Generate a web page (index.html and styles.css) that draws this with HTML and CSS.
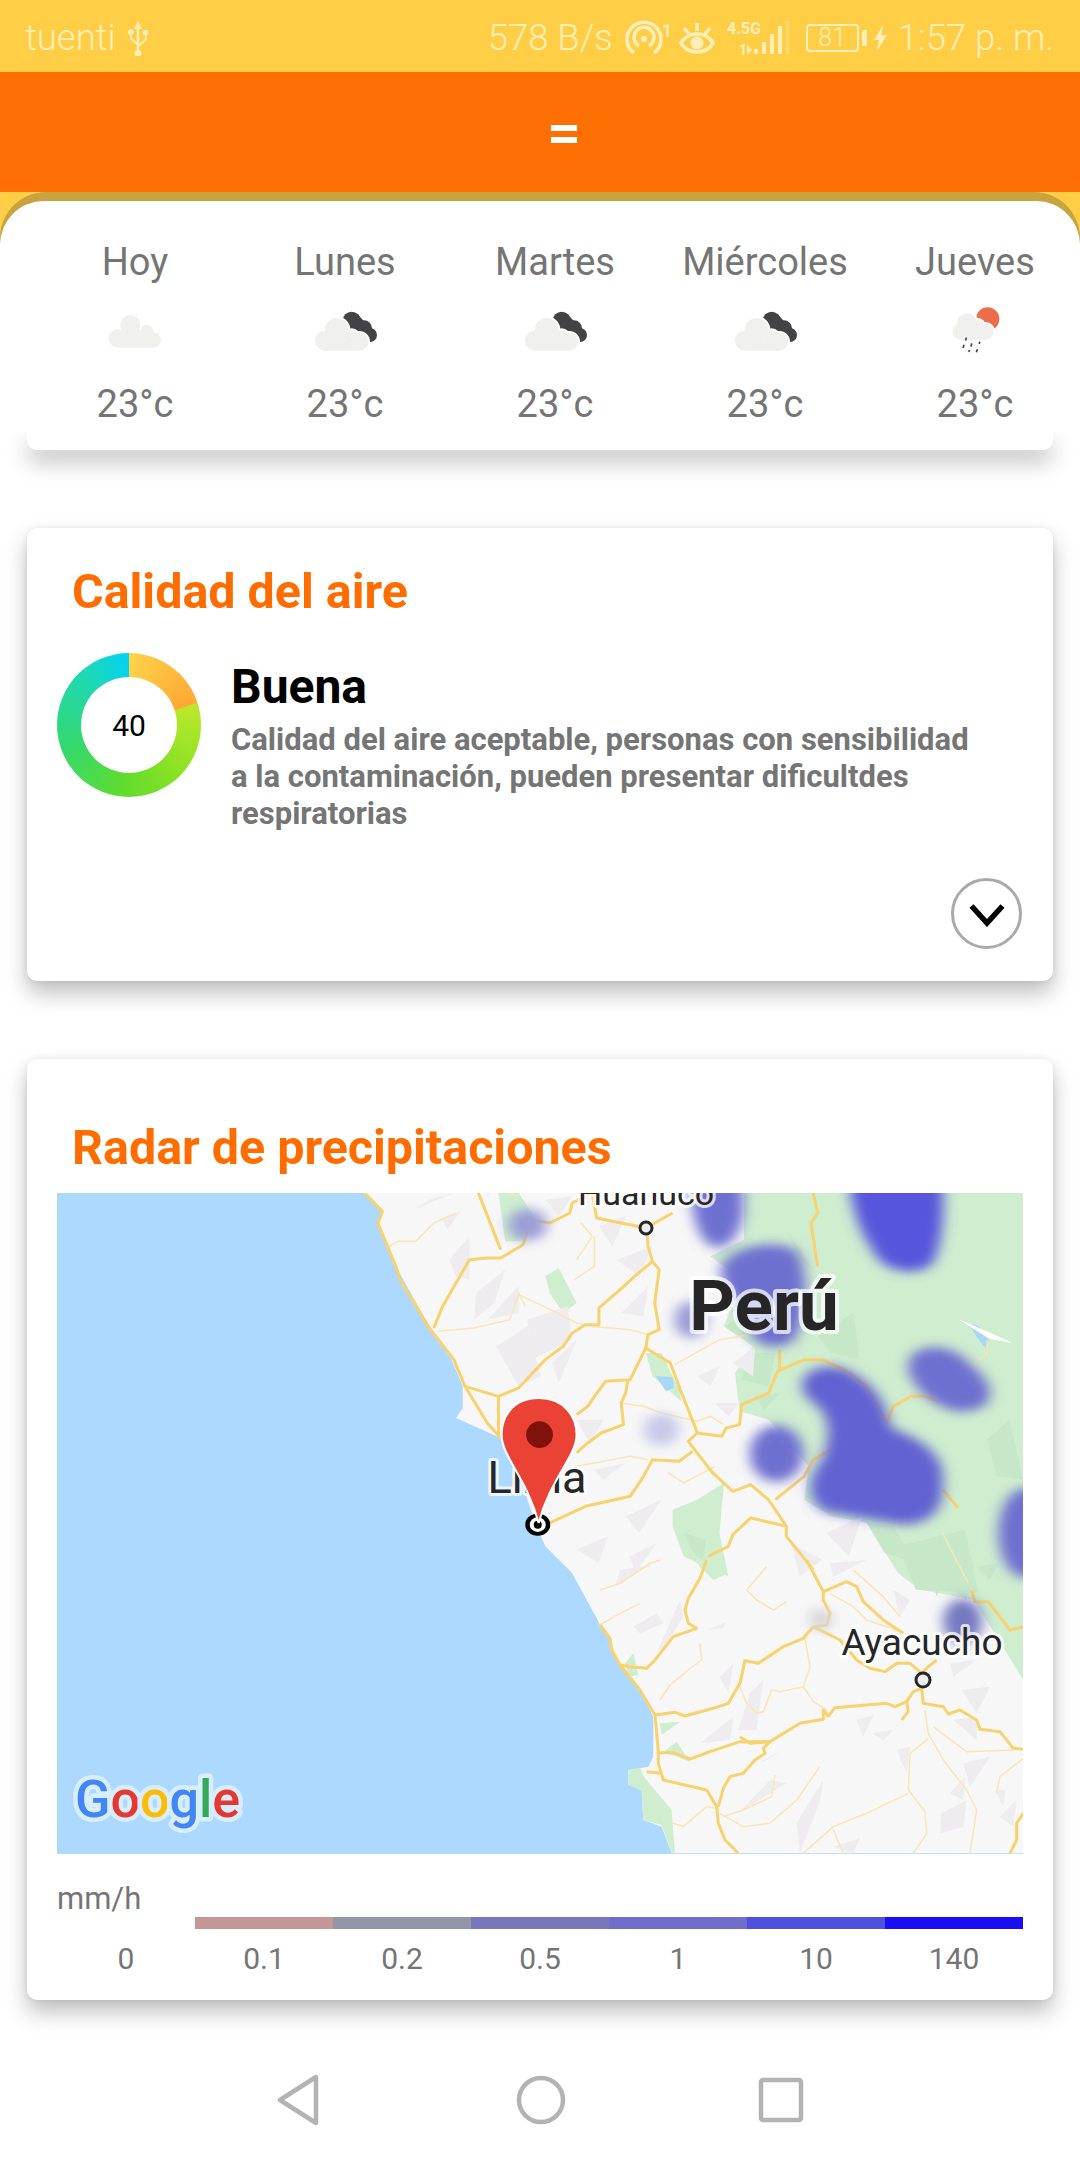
FILE: index.html
```html
<!DOCTYPE html>
<html lang="es">
<head>
<meta charset="utf-8">
<title>Clima</title>
<link rel="stylesheet" href="styles.css">
</head>
<body>
<svg class="defs" width="0" height="0" aria-hidden="true">
  <defs>
    <symbol id="cloud-dark" viewBox="0 0 300 180">
      <g class="ic-dark"><circle cx="170" cy="62" r="27"/><circle cx="207" cy="85" r="24"/><circle cx="225" cy="105" r="21"/><path d="M150 50 L190 45 L240 100 L215 125 L170 95Z"/></g>
      <g class="ic-halo"><circle cx="125" cy="90" r="36"/><circle cx="90" cy="122" r="30"/><circle cx="193" cy="125" r="27"/><circle cx="170" cy="112" r="22"/><rect x="90" y="120" width="103" height="32"/></g>
      <g class="ic-light"><circle cx="125" cy="90" r="36"/><circle cx="90" cy="122" r="30"/><circle cx="193" cy="125" r="27"/><circle cx="170" cy="112" r="22"/><rect x="90" y="120" width="103" height="32"/></g>
    </symbol>
  </defs>
</svg>
<div class="phone">
  <header class="status">
    <div class="status-group">
      <span>tuenti</span>
      <svg class="ic-usb" width="24" height="36" viewBox="0 0 24 36"><path d="M12 1 L16 9 H13.2 V24 L19 19 V15 H17 V10 H22 V15 H20.5 V20 L13.2 27 V30 A3.4 3.4 0 1 1 10.8 30 V25 L4 19 V15 A3 3 0 1 1 5.8 15 V18 L10.8 22 V9 H8Z"/></svg>
    </div>
    <div class="status-group status-right">
      <span class="speed">578 B/s</span>
      <svg class="ic-hot" width="48" height="36" viewBox="0 0 48 36"><path d="M9 33 A17 17 0 1 1 29 33" /><path d="M14 26 A10 10 0 1 1 24 26"/><circle class="solid" cx="19" cy="19" r="3"/><text class="sup" x="37" y="17">1</text></svg>
      <svg class="ic-eye" width="36" height="36" viewBox="0 0 36 36"><path d="M2 23 C9 11 27 11 34 23 C27 35 9 35 2 23Z"/><circle class="solid" cx="18" cy="23" r="6.5"/><path d="M18 3 V11 M5 8 L10 14 M31 8 L26 14"/></svg>
      <svg class="ic-sig" width="62" height="38" viewBox="0 0 62 38"><text class="net" x="0" y="15">4.5G</text><text class="net-sm" x="12" y="36">1</text><path class="arrow" d="M20 26 V36 L25 31Z"/><rect x="27" y="30" width="4" height="5" rx="1"/><rect x="35" y="23" width="4" height="12" rx="1"/><rect x="43" y="15" width="4" height="20" rx="1"/><rect x="51" y="7" width="4" height="28" rx="1"/><rect class="faint" x="59" y="2" width="3" height="33" rx="1"/></svg>
      <div class="battery">
        <div class="bat-body">81</div>
        <div class="bat-nub"></div>
      </div>
      <svg class="ic-bolt" width="13" height="26" viewBox="0 0 13 26"><path d="M9 0 L0 15 H5 L3 26 L13 10 H7.5Z"/></svg>
      <span class="clock">1:57 p. m.</span>
    </div>
  </header>
  <div class="topbar"><button class="menu" aria-label="Menú"><span></span><span></span></button></div>
  <main class="content">
    <section class="hero">
      <div class="hero-shell">
        <div class="forecast">
          <div class="day"><div class="day-name">Hoy</div>
            <svg class="ic-day" width="100" height="60" viewBox="0 0 300 180"><g class="ic-light"><circle cx="136" cy="75" r="30"/><circle cx="186" cy="92" r="18"/><circle cx="99" cy="115" r="28"/><circle cx="205" cy="120" r="23"/><rect x="99" y="90" width="106" height="53"/></g></svg>
            <div class="temp">23°c</div></div>
          <div class="day"><div class="day-name">Lunes</div>
            <svg class="ic-day" width="100" height="60"><use href="#cloud-dark" width="100" height="60"/></svg>
            <div class="temp">23°c</div></div>
          <div class="day"><div class="day-name">Martes</div>
            <svg class="ic-day" width="100" height="60"><use href="#cloud-dark" width="100" height="60"/></svg>
            <div class="temp">23°c</div></div>
          <div class="day"><div class="day-name">Miércoles</div>
            <svg class="ic-day" width="100" height="60"><use href="#cloud-dark" width="100" height="60"/></svg>
            <div class="temp">23°c</div></div>
          <div class="day"><div class="day-name">Jueves</div>
            <svg class="ic-day" width="100" height="60" viewBox="0 0 300 180"><g transform="translate(16 0)"><circle class="ic-sun" cx="172" cy="57" r="35"/><g class="ic-halo"><circle cx="110" cy="70" r="30"/><circle cx="92" cy="95" r="25"/><circle cx="165" cy="95" r="24"/><circle cx="142" cy="78" r="19"/><rect x="92" y="85" width="73" height="35"/></g><g class="ic-light"><circle cx="110" cy="70" r="30"/><circle cx="92" cy="95" r="25"/><circle cx="165" cy="95" r="24"/><circle cx="142" cy="78" r="19"/><rect x="92" y="85" width="73" height="35"/></g><path class="ic-rain" d="M108 113 L106 122 M148 125 L147 132 M124 130 L122 140 M101 134 L98 144 M117 150 L116 156 M141 148 L138 157"/></g></svg>
            <div class="temp">23°c</div></div>
        </div>
      </div>
    </section>
    <div class="card-stub"></div>

    <section class="card card-air">
      <h2 class="card-title">Calidad del aire</h2>
      <div class="air-row">
        <div class="donut"><div class="donut-hole">40</div></div>
        <div class="air-text">
          <h3 class="air-level">Buena</h3>
          <p class="air-desc">Calidad del aire aceptable, personas con sensibilidad a la contaminación, pueden presentar dificultdes respiratorias</p>
        </div>
      </div>
      <div class="air-actions">
        <button class="round-btn" aria-label="Ver más"><svg width="36" height="24" viewBox="0 0 36 24"><path d="M2.5 3 L18 20 L33.5 3"/></svg></button>
      </div>
    </section>

    <section class="card card-radar">
      <h2 class="card-title">Radar de precipitaciones</h2>
      <div class="map">
        <svg class="map-svg" width="966" height="661" viewBox="0 0 966 661">
          <defs>
            <filter id="soft" x="-40%" y="-40%" width="180%" height="180%"><feGaussianBlur stdDeviation="16"/></filter>
          </defs>
          <rect class="sea" width="966" height="661"/>
          <polygon class="land" transform="translate(283 -13.33) scale(.4464 .3333)" points="55,40 95,95 85,140 125,260 200,440 250,540 275,620 275,685 260,715 360,775 400,880 440,1040 460,1100 520,1180 560,1280 620,1420 650,1500 1530,1500 1530,40"/>
          <polygon class="land" transform="translate(543 367) scale(.3333)" points="-30,130 0,195 30,240 50,300 120,390 160,470 160,590 145,620 120,625 85,630 85,675 125,690 130,780 185,800 215,880 1440,880 1440,-20 -30,-20"/>
          <!-- upper map -->
          <g transform="translate(283 -13.33) scale(.4464 .3333)">
            <polygon class="green" points="905,40 1530,40 1530,1500 1420,1260 1300,1230 1250,1180 1180,1030 1100,1010 1040,960 1050,860 960,720 895,695 885,580 925,500 870,450 860,440 900,300 830,230 905,180"/>
            <g class="green">
              <polygon points="355,40 400,40 435,110 410,185 370,185"/>
              <polygon points="460,290 490,265 530,370 500,400 470,340"/>
              <polygon points="685,520 720,520 760,630 765,665 700,590"/>
              <polygon points="745,990 800,960 860,910 850,1060 870,1190 830,1170 770,1130 745,1040"/>
            </g>
            <g class="green-dark">
              <polygon points="1000,150 1060,270 1030,240"/>
              <polygon points="1070,470 1150,400 1165,540 1100,520"/>
              <polygon points="860,440 900,410 910,480"/>
              <polygon points="920,520 975,520 960,620 900,600"/>
              <polygon points="930,650 985,640 950,690"/>
              <polygon points="1250,1100 1400,1050 1430,1240 1290,1230"/>
              <polygon points="1450,780 1500,720 1530,900 1470,890"/>
              <polygon points="1180,1030 1240,1040 1290,1150 1220,1120"/>
              <polygon points="770,1060 820,1080 810,1170"/>
            </g>
            <g class="terrain">
              <polygon points="165,90 255,40 200,60"/>
              <polygon points="230,120 270,95 240,150"/>
              <polygon points="245,240 290,170 290,300 260,290"/>
              <polygon points="305,340 370,270 345,370 300,420"/>
              <polygon points="330,420 400,320 400,400"/>
              <polygon points="350,500 420,440 450,590 400,620"/>
              <polygon points="420,420 510,380 520,480 430,540"/>
              <polygon points="475,550 530,480 490,610"/>
              <polygon points="580,140 640,110 610,200"/>
              <polygon points="620,240 700,200 670,290"/>
              <polygon points="460,60 520,50 490,110"/>
              <polygon points="630,400 690,320 680,410"/>
              <polygon points="800,590 850,560 830,620"/>
              <polygon points="880,550 930,500 925,590"/>
              <polygon points="840,670 895,670 870,710"/>
              <polygon points="530,720 590,720 560,790"/>
              <polygon points="570,870 640,850 590,900"/>
              <polygon points="530,1110 600,1070 580,1150"/>
              <polygon points="640,1010 720,960 670,1060"/>
              <polygon points="650,1130 710,1090 660,1180"/>
              <polygon points="1090,1060 1170,1010 1140,1130"/>
              <polygon points="1010,1090 1080,1140 1030,1190"/>
            </g>
            <polygon class="lake" points="708,590 745,592 748,625 730,635"/>
            <polygon class="lake" points="1412,432 1430,440 1455,480 1445,505 1420,460"/>
            <polygon class="streak" points="1385,418 1410,432 1508,490 1455,478"/>
            <g class="roads-thin">
              <polyline points="105,205 130,185 170,185 210,130 260,100"/>
              <polyline points="220,455 300,445 380,420 400,345 480,395 530,430 560,440 650,450 690,465"/>
              <polyline points="400,340 415,380"/>
              <polyline points="530,240 565,170 540,130"/>
              <polyline points="570,170 570,260 525,300"/>
              <polyline points="630,670 680,680 720,700 800,725 830,710 860,735"/>
              <polyline points="750,555 810,510 850,480 920,465"/>
              <polyline points="530,860 650,830 690,840"/>
              <polyline points="735,880 770,910 840,860"/>
              <polyline points="1350,1060 1380,1140 1415,1230"/>
              <polyline points="1450,480 1450,520 1420,555 1280,600"/>
              <polyline points="330,40 360,30 400,50"/>
            </g>
            <g class="roads">
              <polyline points="55,40 95,95 85,130 125,260 135,300 200,445 255,540 280,620 355,650 400,625 460,540 500,500 520,460 550,435 580,435 580,385 610,350 640,315 660,290 700,245 690,200 688,150"/>
              <polyline points="210,445 230,380 290,240 330,235 360,235 410,195 430,120 470,130 515,100 520,70 565,40"/>
              <polyline points="310,40 360,210"/>
              <polyline points="565,40 575,115 610,125 650,135 685,145 745,100"/>
              <polyline points="700,245 715,270 705,370 715,450 690,465 685,505 740,550 765,640 795,740 800,760 780,785 835,880 880,935 920,915 960,960 1000,1040 1000,1070 1060,1170"/>
              <polyline points="685,505 650,600 595,605 570,650 555,680 530,705"/>
              <polyline points="280,620 330,730 360,775"/>
              <polyline points="355,650 355,770"/>
              <polyline points="645,600 640,640 630,670 635,735 585,760 555,790 530,820"/>
              <polyline points="800,760 855,770 865,745 895,735 900,675 960,640 980,575 1040,540 1080,540 1130,570 1180,620 1225,730"/>
              <polyline points="985,510 985,575"/>
              <polyline points="975,960 1040,890 1060,840 1100,810"/>
              <polyline points="1225,730 1240,680 1280,650 1310,650 1340,665"/>
              <polyline points="1060,40 1070,100 1055,130 1070,260"/>
              <polyline points="1350,930 1385,985"/>
              <polyline points="470,1030 550,980 650,950 680,890 700,840 760,845 790,815"/>
              <polyline points="1000,1040 920,1015 880,1065 870,1100 825,1130"/>
            </g>
          </g>
          <!-- lower map -->
          <g transform="translate(543 367) scale(.3333)">
            <g class="green">
              <polygon points="270,-20 385,40 340,60 300,20"/>
              <polygon points="85,630 120,625 135,655 215,750 225,880 215,880 185,795 130,780 125,690 85,675"/>
              <polygon points="75,310 100,280 115,345 85,350"/>
              <polygon points="180,490 240,485 185,525"/>
              <polygon points="190,575 230,545 270,605"/>
            </g>
            <g class="green-dark">
              <polygon points="925,0 960,20 940,70"/>
              <polygon points="1000,60 1030,55 1010,110"/>
              <polygon points="1130,20 1195,10 1170,60"/>
              <polygon points="1060,90 1120,60 1100,120"/>
            </g>
            <g class="terrain">
              <polygon points="60,30 150,15 45,80"/>
              <polygon points="170,280 240,120 250,170 200,250"/>
              <polygon points="100,200 170,160 190,190 120,220"/>
              <polygon points="320,210 380,185 370,205"/>
              <polygon points="360,350 400,310 385,400"/>
              <polygon points="415,510 450,400 490,360 470,510"/>
              <polygon points="300,550 400,470 390,540"/>
              <polygon points="415,760 510,660 560,670"/>
              <polygon points="470,610 550,570 500,600"/>
              <polygon points="590,790 670,660 660,720 600,880"/>
              <polygon points="770,480 820,465 790,530"/>
              <polygon points="815,520 880,510 850,540"/>
              <polygon points="890,570 930,560 920,640"/>
              <polygon points="1090,610 1170,590 1110,680"/>
              <polygon points="1050,700 1095,650 1090,720"/>
              <polygon points="1025,760 1100,720 1090,800 1020,820"/>
              <polygon points="1185,690 1215,690 1210,740"/>
              <polygon points="1085,390 1170,380 1130,460"/>
              <polygon points="1050,310 1130,300 1060,350"/>
              <polygon points="1060,480 1130,470 1130,540"/>
              <polygon points="690,10 800,0 700,50"/>
              <polygon points="880,90 930,120 900,170"/>
              <polygon points="1200,770 1250,720 1240,800"/>
              <polygon points="700,860 780,835 760,880"/>
            </g>
            <g class="roads-thin">
              <polyline points="0,90 60,70 150,10 180,0"/>
              <polyline points="0,195 60,160 120,130"/>
              <polyline points="500,20 440,90 470,120 520,150 560,125"/>
              <polyline points="615,235 630,320 610,380 640,425 680,450"/>
              <polyline points="610,380 540,395 515,390 490,455 470,460 440,430 420,380"/>
              <polyline points="300,250 305,300 265,330 210,375 180,420"/>
              <polyline points="360,760 430,800 510,790 590,720 660,620"/>
              <polyline points="525,645 515,710 430,750 370,770"/>
              <polyline points="975,450 985,520 1030,600 1100,690 1130,750 1110,880"/>
              <polyline points="985,535 930,580 925,690 975,755 980,820 940,880"/>
              <polyline points="925,700 800,760 700,800 610,880"/>
              <polyline points="700,810 730,880"/>
              <polyline points="1000,500 1100,575 1240,570"/>
              <polyline points="1270,595 1200,650 1190,700"/>
              <polyline points="220,790 250,800 320,740 350,745"/>
              <polyline points="690,100 760,140 800,180 890,210"/>
              <polyline points="760,30 850,110 900,170"/>
            </g>
            <g class="roads">
              <polyline points="320,0 300,55 265,115 255,150 265,190 290,205 220,230 165,300 140,325 90,320 60,315 35,270 30,235 0,195"/>
              <polyline points="60,315 120,390 165,465 225,457 255,468 340,445 385,430 420,370 435,302 475,310 550,260 610,235 640,200 680,195 690,160 670,120 670,95 620,0"/>
              <polyline points="670,95 740,65 770,80 790,125 850,180 910,220"/>
              <polyline points="640,200 720,240 770,300 810,325 855,335 890,310 930,310 965,340"/>
              <polyline points="165,465 175,575 175,610 190,660 320,690 350,740 355,790 375,840 415,880"/>
              <polyline points="175,578 220,578 270,597 330,575 420,545 510,545 600,490 670,478 670,450 685,468 705,443 860,430 885,440 920,425 940,395 965,385"/>
              <polyline points="420,530 450,550 510,545"/>
              <polyline points="510,545 490,565 495,580 465,600 430,640 390,650 370,685 355,740"/>
              <polyline points="965,385 970,430 1030,440 1045,462 1080,450 1130,480 1140,508 1200,515 1240,565 1270,568"/>
              <polyline points="920,425 925,455 905,480"/>
              <polyline points="1115,90 1125,125 1165,125 1230,210 1270,200"/>
              <polyline points="1270,760 1250,790 1250,840 1230,880"/>
              <polyline points="140,635 185,640"/>
              <polyline points="965,340 985,320 1010,300"/>
            </g>
          </g>
          <!-- radar -->
          <g class="rain" transform="translate(283 -13.33) scale(.4464 .3333)">
            <path class="r-mid" d="M785 -20 L895 -20 C915 80 905 180 850 205 C805 200 785 120 785 -20Z"/>
            <path class="r-dark" d="M1140 -20 L1350 -20 C1355 100 1350 205 1325 255 C1290 290 1235 275 1210 245 C1185 195 1145 130 1140 -20Z"/>
            <path class="r-mid" d="M855 260 C875 195 985 175 1025 215 C1055 290 1045 425 1015 485 C980 515 925 505 915 445 C895 355 845 335 855 260Z"/>
            <ellipse class="r-pale" cx="785" cy="420" rx="36" ry="55"/>
            <path class="r-mid" d="M1275 540 C1295 485 1375 495 1405 545 C1455 595 1475 655 1435 685 C1380 715 1325 675 1295 625 C1275 590 1270 570 1275 540Z"/>
            <path class="r-strong" d="M1035 610 C1045 555 1115 545 1155 585 C1215 635 1225 695 1235 745 C1295 775 1345 815 1350 880 C1355 960 1345 1025 1270 1035 C1200 1025 1125 1005 1085 995 C1045 960 1045 900 1075 850 C1105 780 1095 700 1065 675 C1045 655 1035 640 1035 610Z"/>
            <ellipse class="r-mid" cx="978" cy="822" rx="60" ry="85"/>
            <ellipse class="r-mid" cx="1535" cy="1060" rx="60" ry="135"/>
            <ellipse class="r-faint" cx="720" cy="750" rx="40" ry="48"/>
            <ellipse class="r-pale" cx="420" cy="135" rx="44" ry="48"/>
            <ellipse class="r-deep" cx="1395" cy="1325" rx="44" ry="68"/>
            <ellipse class="r-grey" cx="1077" cy="1320" rx="26" ry="34"/>
          </g>
          <!-- labels -->
          <text class="lbl" x="589" y="12" text-anchor="middle">Huánuco</text>
          <circle class="city" cx="589" cy="35" r="6"/>
          <text class="lbl-country" x="707" y="137" text-anchor="middle">Perú</text>
          <text class="lbl-lima" x="480" y="300" text-anchor="middle">Lima</text>
          <text class="lbl-big" x="865" y="462" text-anchor="middle">Ayacucho</text>
          <circle class="city" cx="866" cy="487" r="7"/>
          <!-- pin -->
          <g transform="translate(283 -13.33) scale(.4464 .3333)">
            <ellipse class="t-black" cx="443" cy="1035" rx="28" ry="33"/>
            <ellipse class="t-white" cx="443" cy="1035" rx="18" ry="22"/>
            <ellipse class="t-black" cx="443" cy="1035" rx="9" ry="12"/>
            <path class="pin" d="M445 655 C385 655 362 715 362 765 C362 830 420 900 445 1030 C470 900 530 830 530 765 C530 715 505 655 445 655Z"/>
            <ellipse class="pin-dot" cx="447" cy="765" rx="30" ry="40"/>
          </g>
          <text class="google" x="18" y="624"><tspan class="g-b">G</tspan><tspan class="g-r">o</tspan><tspan class="g-y">o</tspan><tspan class="g-b">g</tspan><tspan class="g-g">l</tspan><tspan class="g-r">e</tspan></text>
        </svg>
      </div>
      <div class="legend">
        <div class="legend-unit">mm/h</div>
        <div class="legend-blank"></div>
        <div class="seg s1"></div><div class="seg s2"></div><div class="seg s3"></div><div class="seg s4"></div><div class="seg s5"></div><div class="seg s6"></div>
        <div class="legend-val">0</div><div class="legend-val">0.1</div><div class="legend-val">0.2</div><div class="legend-val">0.5</div><div class="legend-val">1</div><div class="legend-val">10</div><div class="legend-val">140</div>
      </div>
    </section>
  </main>
  <nav class="navbar">
    <svg width="44" height="52" viewBox="0 0 44 52"><path d="M39 3 V49 L3 26Z"/></svg>
    <svg width="52" height="52" viewBox="0 0 52 52"><circle cx="26" cy="26" r="22"/></svg>
    <svg width="46" height="46" viewBox="0 0 46 46"><rect x="3" y="3" width="40" height="40" rx="2"/></svg>
  </nav>
</div>
</body>
</html>
```
FILE: styles.css
```css
* { box-sizing: border-box; }
html, body { margin: 0; padding: 0; background: #fff; }
body { font-family: Roboto, "Noto Sans", sans-serif; color: #757575; }
h2, h3, p { margin: 0; }
button { border: 0; background: none; padding: 0; }
.defs { display: block; height: 0; }
.phone { width: 1080px; height: 2160px; display: flex; flex-direction: column; overflow: hidden; }

/* status bar */
.status { height: 72px; flex: none; background: #ffce47; color: #ffeeb8; display: flex; justify-content: space-between; align-items: center; padding: 3px 26px 0 25px; font-size: 36.5px; font-weight: 300; }
.status-group { display: flex; align-items: center; gap: 10px; }
.status-right { gap: 0; }
.status svg { fill: none; stroke: #ffeeb8; stroke-width: 3.5; display: block; }
.status svg .solid, .ic-usb path, .ic-bolt path, .ic-sig rect, .ic-sig .arrow { fill: #ffeeb8; stroke: none; }
.status svg text { stroke: none; fill: #ffeeb8; font-family: Roboto, sans-serif; }
.status svg .sup { font-size: 18px; font-weight: 500; }
.status svg .net { font-size: 16px; font-weight: 700; }
.status svg .net-sm { font-size: 14px; font-weight: 700; }
.status svg .faint { opacity: .35; }
.speed { margin-right: 12px; }
.ic-eye { margin: 0 12px 0 6px; }
.ic-sig { margin-right: 17px; }
.battery { display: flex; align-items: center; gap: 3px; }
.bat-body { width: 53px; height: 28px; border: 2px solid #ffeeb8; border-radius: 4px; font-size: 25px; line-height: 24px; text-align: center; }
.bat-nub { width: 5px; height: 16px; border-radius: 1px; background: #ffeeb8; }
.ic-bolt { margin: 0 11px 0 7px; }

/* top bar */
.topbar { height: 120px; flex: none; background: #ff7004; display: flex; align-items: center; justify-content: center; padding-left: 48px; position: relative; z-index: 2; }
.menu { display: flex; flex-direction: column; gap: 6px; width: 26px; margin-top: 4px; }
.menu span { display: block; height: 6px; background: #fff; }

/* content */
.content { flex: 1; min-height: 0; overflow: hidden; background: #fff; }
.hero { position: relative; z-index: 1; background: linear-gradient(#ffce47 50px, #fff 50px); }
.hero-shell { background: #c9a340; border-radius: 46px 46px 0 0; padding-top: 9px; }
.forecast { height: 231px; background: #fff; border-radius: 44px 44px 0 0; display: grid; grid-template-columns: repeat(5, 210px); padding-left: 30px; padding-top: 39px; }
.day { display: flex; flex-direction: column; align-items: center; }
.day-name { font-size: 38px; line-height: 44px; white-space: nowrap; }
.ic-day { display: block; margin-top: 16px; flex: none; }
.temp { font-size: 38px; line-height: 44px; margin-top: 22px; }
.ic-light { fill: #f0f0ee; }
.ic-dark { fill: #434345; }
.ic-halo { fill: #fff; stroke: #fff; stroke-width: 10; }
.ic-sun { fill: #ec6d4b; }
.ic-rain { stroke: #444; stroke-width: 5; fill: none; }
.card-stub { height: 18px; margin: 0 27px; background: #fff; border-radius: 0 0 10px 10px; box-shadow: 0 12px 22px rgba(0,0,0,.26); }

.card { margin: 78px 27px 0; background: #fff; border-radius: 10px; box-shadow: 0 12px 22px rgba(0,0,0,.26), 0 0 6px rgba(0,0,0,.08); }
.card-air { height: 453px; padding-top: 37px; }
.card-radar { height: 941px; padding-top: 62px; }
.card-title { font-size: 48.4px; line-height: 54px; font-weight: 700; color: #ff6d00; padding-left: 45px; white-space: nowrap; }
.air-row { display: flex; margin: 34px 0 0 30px; }
.donut { width: 144px; height: 144px; border-radius: 50%; flex: none; display: flex; align-items: center; justify-content: center; background: conic-gradient(#ffd24a 0deg, #ffa833 72deg, #bce82c 72deg, #8ee223 130deg, #5fdc2e 185deg, #35d96f 250deg, #1ed8b4 320deg, #04d2f2 360deg); }
.donut-hole { width: 96px; height: 96px; border-radius: 50%; background: #fff; display: flex; align-items: center; justify-content: center; font-size: 30px; color: #000; }
.air-text { margin-left: 30px; width: 745px; padding-top: 7px; }
.air-level { font-size: 48px; line-height: 54px; font-weight: 700; color: #000; }
.air-desc { font-size: 31px; line-height: 37px; font-weight: 700; color: #757575; margin-top: 7px; }
.air-actions { display: flex; justify-content: flex-end; padding-right: 31px; margin-top: 46px; }
.round-btn { width: 71px; height: 71px; border-radius: 50%; border: 3px solid #aaa; display: flex; align-items: center; justify-content: center; }
.round-btn svg { display: block; margin-top: 2px; fill: none; stroke: #000; stroke-width: 5.5; }

/* map */
.map { margin: 18px 30px 0; height: 661px; overflow: hidden; }
.map-svg { display: block; }
.sea { fill: #aed9fe; }
.land { fill: #f7f7f7; }
.green, .green polygon { fill: #cfedcf; }
.green-dark polygon { fill: #c6e8c8; }
.terrain polygon { fill: #eeecee; }
.lake { fill: #a8d8f8; }
.streak { fill: #fff; }
.roads polyline { fill: none; stroke: #f8d26d; stroke-width: 3; stroke-linejoin: round; vector-effect: non-scaling-stroke; }
.roads-thin polyline { fill: none; stroke: #fbe5b4; stroke-width: 1.5; stroke-linejoin: round; vector-effect: non-scaling-stroke; }
.rain > * { filter: url(#soft); }
.r-dark { fill: #5656dc; }
.r-strong { fill: #6262d2; }
.r-mid { fill: #6e70d0; }
.r-pale { fill: #9c9dd6; }
.r-faint { fill: #c8c9e8; }
.r-deep { fill: #7478bf; }
.r-grey { fill: #d6d6d6; }
.lbl, .lbl-big, .lbl-lima, .lbl-country { font-family: Roboto, sans-serif; fill: #262626; paint-order: stroke; stroke-linejoin: round; }
.lbl { font-size: 34px; stroke: rgba(255,255,255,.75); stroke-width: 6px; }
.lbl-big { font-size: 37px; stroke: rgba(255,255,255,.75); stroke-width: 6px; }
.lbl-lima { font-size: 45px; stroke: rgba(255,255,255,.75); stroke-width: 6px; }
.lbl-country { font-size: 71px; font-weight: 700; stroke: rgba(255,255,255,.72); stroke-width: 8px; }
.city { fill: #eee; stroke: #262626; stroke-width: 3; }
.pin { fill: #ea4335; stroke: #fff; stroke-width: 2; vector-effect: non-scaling-stroke; }
.pin-dot { fill: #7f130c; }
.t-black { fill: #000; }
.t-white { fill: #fff; }
.google { font-family: Roboto, sans-serif; font-size: 52px; font-weight: 500; paint-order: stroke; stroke: #d8eeff; stroke-width: 9px; stroke-linejoin: round; }
.g-b { fill: #4285f4; }
.g-r { fill: #e5392f; }
.g-y { fill: #fbbc05; }
.g-g { fill: #34a853; }

/* legend */
.legend { display: grid; grid-template-columns: repeat(7, 1fr); margin: 26px 30px 0; }
.legend-unit { grid-column: 1 / -1; font-size: 31px; line-height: 37px; height: 37px; }
.legend-blank { height: 12px; }
.seg { height: 12px; }
.s1 { background: #c49696; }
.s2 { background: #9595a9; }
.s3 { background: #7877bd; }
.s4 { background: #6f6fcb; }
.s5 { background: #5050df; }
.s6 { background: #1a0df5; }
.legend-val { text-align: center; font-size: 30px; line-height: 36px; margin-top: 12px; }

/* nav */
.navbar { height: 121px; flex: none; background: #fff; display: flex; align-items: center; padding-left: 277px; }
.navbar svg { display: block; fill: none; stroke: #b3b3b3; stroke-width: 4.5; stroke-linejoin: round; }
.navbar svg:nth-child(1) { margin-right: 194px; }
.navbar svg:nth-child(2) { margin-right: 191px; }
```
